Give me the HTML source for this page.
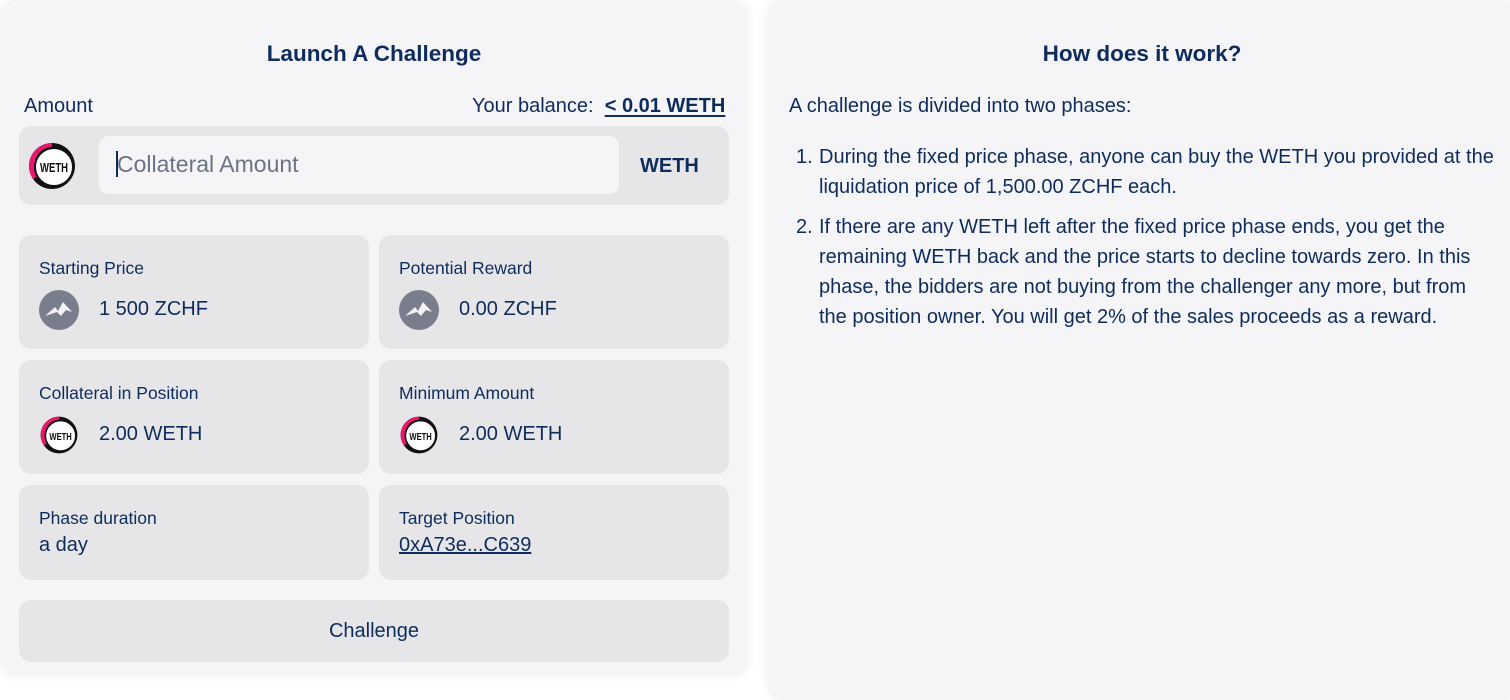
<!DOCTYPE html>
<html><head><meta charset="utf-8"><style>
*{box-sizing:border-box;margin:0;padding:0}
body{width:1510px;height:678px;background:#fff;font-family:"Liberation Sans",sans-serif;color:#0d2c5c;position:relative;overflow:hidden}
.panel{position:absolute;top:0;background:#f5f5f8;border-radius:16px;box-shadow:0 0 10px rgba(0,0,0,0.06)}
#l{left:0;width:748px;height:676px}
#r{left:767px;width:750px;height:700px}
h2{position:absolute;font-size:22.5px;font-weight:bold;text-align:center;top:41px}
.t{position:absolute;font-size:20px}
.box{position:absolute;background:#e6e6e9;border-radius:12px}
.card{position:absolute;background:#e6e6e9;border-radius:12px;width:350px;height:114px}
.card .lab{position:absolute;left:20px;top:23px;font-size:17.5px}
.card .val{position:absolute;left:80px;top:63px;font-size:20px}
.card .ic{position:absolute;left:20px;top:55px}
a{color:#0d2c5c}
ol{position:absolute;left:819px;top:142px;width:678px;font-size:20px;line-height:30px;list-style:none}
ol li{position:relative;margin-bottom:10px}
ol li span{position:absolute;left:-23px}
</style></head><body>
<div class="panel" id="l"></div>
<div class="panel" id="r"></div>
<h2 style="left:0;width:748px">Launch A Challenge</h2>
<div class="t" style="left:24px;top:95px">Amount</div>
<div class="t" style="left:472px;top:95px">Your balance: &nbsp;<a style="font-weight:bold;text-decoration:underline;text-decoration-thickness:2px;text-underline-offset:3px">&lt; 0.01 WETH</a></div>
<div class="box" style="left:19px;top:126px;width:710px;height:79px"></div>
<svg style="position:absolute;left:27px;top:141px" width="50" height="50" viewBox="0 0 50 50">
<circle cx="25" cy="25" r="23" fill="#111"/><path d="M25 2A23 23 0 0 0 6 38L12 34A17 17 0 0 1 25 6Z" fill="#e8186f"/><circle cx="27" cy="26" r="19" fill="#fff" stroke="#111" stroke-width="2"/>
<text x="27" y="31" font-family="Liberation Sans" font-weight="bold" font-size="13" text-anchor="middle" fill="#111" textLength="28" lengthAdjust="spacingAndGlyphs">WETH</text></svg>
<div style="position:absolute;left:99px;top:136px;width:520px;height:58px;background:#f5f5f8;border-radius:10px"></div>
<div style="position:absolute;left:116px;top:151px;width:2px;height:26px;background:#0d2c5c"></div>
<div style="position:absolute;left:117px;top:151px;font-size:23px;color:#6b7385">Collateral Amount</div>
<div style="position:absolute;left:640px;top:155px;font-size:20px;font-weight:bold">WETH</div>

<div class="card" style="left:19px;top:235px"><div class="lab">Starting Price</div><svg class="ic" width="40" height="40"><circle cx="20" cy="20" r="20" fill="#7a7d8c"/><path d="M6 26L16 17L19 21L24 12L33 22L27 20L22 26L18 22Z" fill="#fff" opacity=".9"/></svg><div class="val">1 500 ZCHF</div></div>
<div class="card" style="left:379px;top:235px"><div class="lab">Potential Reward</div><svg class="ic" width="40" height="40"><circle cx="20" cy="20" r="20" fill="#7a7d8c"/><path d="M6 26L16 17L19 21L24 12L33 22L27 20L22 26L18 22Z" fill="#fff" opacity=".9"/></svg><div class="val">0.00 ZCHF</div></div>
<div class="card" style="left:19px;top:360px"><div class="lab">Collateral in Position</div><svg class="ic" width="40" height="40" viewBox="0 0 50 50"><circle cx="25" cy="25" r="23" fill="#111"/><path d="M25 2A23 23 0 0 0 6 38L12 34A17 17 0 0 1 25 6Z" fill="#e8186f"/><circle cx="27" cy="26" r="19" fill="#fff" stroke="#111" stroke-width="2"/><text x="27" y="31" font-family="Liberation Sans" font-weight="bold" font-size="13" text-anchor="middle" fill="#111" textLength="28" lengthAdjust="spacingAndGlyphs">WETH</text></svg><div class="val">2.00 WETH</div></div>
<div class="card" style="left:379px;top:360px"><div class="lab">Minimum Amount</div><svg class="ic" width="40" height="40" viewBox="0 0 50 50"><circle cx="25" cy="25" r="23" fill="#111"/><path d="M25 2A23 23 0 0 0 6 38L12 34A17 17 0 0 1 25 6Z" fill="#e8186f"/><circle cx="27" cy="26" r="19" fill="#fff" stroke="#111" stroke-width="2"/><text x="27" y="31" font-family="Liberation Sans" font-weight="bold" font-size="13" text-anchor="middle" fill="#111" textLength="28" lengthAdjust="spacingAndGlyphs">WETH</text></svg><div class="val">2.00 WETH</div></div>
<div class="card" style="left:19px;top:485px;height:95px"><div class="lab">Phase duration</div><div style="position:absolute;left:20px;top:49px;font-size:20px">a day</div></div>
<div class="card" style="left:379px;top:485px;height:95px"><div class="lab">Target Position</div><div style="position:absolute;left:20px;top:49px;font-size:20px;text-decoration:underline">0xA73e...C639</div></div>
<div class="box" style="left:19px;top:600px;width:710px;height:62px;text-align:center;line-height:62px;font-size:20px">Challenge</div>

<h2 style="left:767px;width:750px">How does it work?</h2>
<div class="t" style="left:789px;top:95px">A challenge is divided into two phases:</div>
<ol>
<li><span>1.</span>During the fixed price phase, anyone can buy the WETH you provided at the liquidation price of 1,500.00 ZCHF each.</li>
<li><span>2.</span>If there are any WETH left after the fixed price phase ends, you get the remaining WETH back and the price starts to decline towards zero. In this phase, the bidders are not buying from the challenger any more, but from the position owner. You will get 2% of the sales proceeds as a reward.</li>
</ol>
</body></html>
